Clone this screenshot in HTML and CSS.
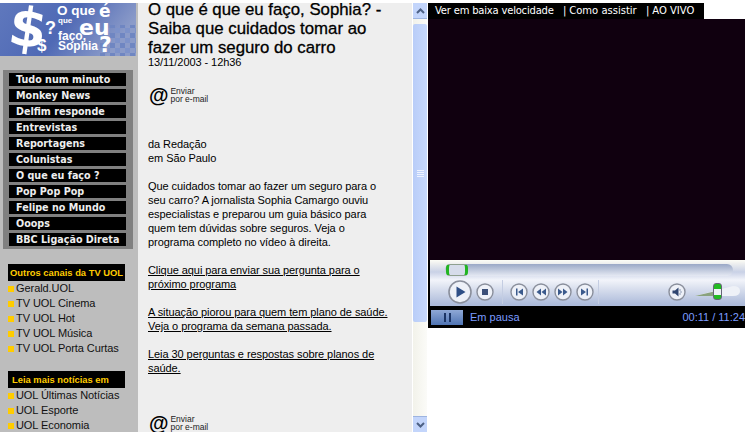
FILE: index.html
```html
<!DOCTYPE html>
<html lang="pt-BR">
<head>
    <meta charset="UTF-8">
    <title>O que é que eu faço, Sophia?</title>
    <link rel="stylesheet" href="styles.css">
</head>
<body>
    <div class="page">
        <aside class="sidebar">
            <svg class="logo" viewBox="0 0 136 53" width="136" height="53">
                <defs>
                    <linearGradient id="logo-bg" x1="0" y1="0" x2="1" y2="0.3">
                        <stop offset="0" stop-color="#5f78bd"/>
                        <stop offset="0.55" stop-color="#4f69b5"/>
                        <stop offset="1" stop-color="#8b9bc9"/>
                    </linearGradient>
                    <pattern id="logo-checks" width="10" height="10" patternUnits="userSpaceOnUse">
                        <rect width="5" height="5" fill="#6f86c2"/>
                        <rect x="5" y="5" width="5" height="5" fill="#7d92ca"/>
                    </pattern>
                </defs>
                <rect width="136" height="53" fill="url(#logo-bg)"/>
                <rect x="100" y="22" width="36" height="31" fill="url(#logo-checks)"/>
                <text x="9" y="43" class="logo-dollar" transform="rotate(8 26 25)">$</text>
                <text x="45" y="31" class="logo-mark">?</text>
                <text x="37" y="48" class="logo-small-dollar">$</text>
                <text x="57" y="12" class="logo-word logo-word-top">O que</text>
                <text x="99" y="14" class="logo-e">é</text>
                <text x="58" y="20" class="logo-tiny">que</text>
                <text x="79" y="32" class="logo-big">eu</text>
                <text x="58" y="37" class="logo-word">faço,</text>
                <text x="58" y="47" class="logo-word">Sophia</text>
                <text x="99" y="49" class="logo-big">?</text>
            </svg>

            <nav class="menu">
                <a class="menu-item">Tudo num minuto</a>
                <a class="menu-item">Monkey News</a>
                <a class="menu-item">Delfim responde</a>
                <a class="menu-item">Entrevistas</a>
                <a class="menu-item">Reportagens</a>
                <a class="menu-item">Colunistas</a>
                <a class="menu-item">O que eu faço ?</a>
                <a class="menu-item">Pop Pop Pop</a>
                <a class="menu-item">Felipe no Mundo</a>
                <a class="menu-item">Ooops</a>
                <a class="menu-item">BBC Ligação Direta</a>
            </nav>

            <h3 class="side-head">Outros canais da TV UOL</h3>
            <ul class="side-list">
                <li>Gerald.UOL</li>
                <li>TV UOL Cinema</li>
                <li>TV UOL Hot</li>
                <li>TV UOL Música</li>
                <li>TV UOL Porta Curtas</li>
            </ul>

            <h3 class="side-head side-head-news">Leia mais notícias em</h3>
            <ul class="side-list">
                <li>UOL Últimas Notícias</li>
                <li>UOL Esporte</li>
                <li>UOL Economia</li>
            </ul>
        </aside>

        <main class="article">
            <h1>O que é que eu faço, Sophia? - Saiba que cuidados tomar ao fazer um seguro do carro</h1>
            <p class="date">13/11/2003 - 12h36</p>
            <a class="send-mail">
                <span class="at">@</span>
                <span class="send-label">Enviar<br>por e-mail</span>
            </a>
            <p class="byline">da Redação<br>em São Paulo</p>
            <p>Que cuidados tomar ao fazer um seguro para o seu carro? A jornalista Sophia Camargo ouviu especialistas e preparou um guia básico para quem tem dúvidas sobre seguros. Veja o programa completo no vídeo à direita.</p>
            <p><a class="link">Clique aqui para enviar sua pergunta para o próximo programa</a></p>
            <p><a class="link">A situação piorou para quem tem plano de saúde. Veja o programa da semana passada.</a></p>
            <p><a class="link">Leia 30 perguntas e respostas sobre planos de saúde.</a></p>
            <a class="send-mail send-mail-bottom">
                <span class="at">@</span>
                <span class="send-label">Enviar<br>por e-mail</span>
            </a>
        </main>

        <div class="scrollbar">
            <div class="scroll-btn">
                <svg width="9" height="6" viewBox="0 0 9 6"><path d="M1 5 L4.5 1.5 L8 5" fill="none" stroke="#4d6185" stroke-width="2"/></svg>
            </div>
            <div class="scroll-thumb">
                <span class="grip"></span><span class="grip"></span><span class="grip"></span><span class="grip"></span>
            </div>
            <div class="scroll-btn scroll-btn-down">
                <svg width="9" height="6" viewBox="0 0 9 6"><path d="M1 1 L4.5 4.5 L8 1" fill="none" stroke="#4d6185" stroke-width="2"/></svg>
            </div>
        </div>

        <section class="video-col">
            <div class="tabs">
                <span class="tab-first">Ver em baixa velocidade</span>
                <span class="tab-sep">|</span><span>Como assistir</span>
                <span class="tab-sep">|</span><span>AO VIVO</span>
            </div>
            <div class="player">
                <div class="screen"></div>
                <div class="controls">
                    <div class="seek">
                        <div class="seek-thumb"></div>
                    </div>
                    <div class="buttons">
                        <svg class="btn-play" width="24" height="24" viewBox="0 0 24 24">
                            <circle cx="12" cy="12" r="11" fill="#eef1f8" stroke="#8a8f9c" stroke-width="1.6"/>
                            <path d="M8.5 6.5 L17.5 12 L8.5 17.5 Z" fill="#2f4f86"/>
                        </svg>
                        <svg class="btn-stop" width="18" height="18" viewBox="0 0 18 18">
                            <circle cx="9" cy="9" r="8" fill="#eef1f8" stroke="#8a8f9c" stroke-width="1.4"/>
                            <rect x="6" y="6" width="6" height="6" fill="#3b4f78"/>
                        </svg>
                        <span class="btn-divider"></span>
                        <svg width="18" height="18" viewBox="0 0 18 18">
                            <circle cx="9" cy="9" r="8" fill="#eef1f8" stroke="#8a8f9c" stroke-width="1.4"/>
                            <path d="M6 5.5 H7.5 V12.5 H6 Z M13 5.5 V12.5 L8 9 Z" fill="#3b5a8c"/>
                        </svg>
                        <svg width="18" height="18" viewBox="0 0 18 18">
                            <circle cx="9" cy="9" r="8" fill="#eef1f8" stroke="#8a8f9c" stroke-width="1.4"/>
                            <path d="M9 5.5 V12.5 L4.5 9 Z M14 5.5 V12.5 L9.5 9 Z" fill="#3b5a8c"/>
                        </svg>
                        <svg width="18" height="18" viewBox="0 0 18 18">
                            <circle cx="9" cy="9" r="8" fill="#eef1f8" stroke="#8a8f9c" stroke-width="1.4"/>
                            <path d="M4 5.5 L8.5 9 L4 12.5 Z M9 5.5 L13.5 9 L9 12.5 Z" fill="#3b5a8c"/>
                        </svg>
                        <svg width="18" height="18" viewBox="0 0 18 18">
                            <circle cx="9" cy="9" r="8" fill="#eef1f8" stroke="#8a8f9c" stroke-width="1.4"/>
                            <path d="M5 5.5 L10 9 L5 12.5 Z M10.5 5.5 H12 V12.5 H10.5 Z" fill="#3b5a8c"/>
                        </svg>
                        <span class="btn-divider btn-divider-end"></span>
                        <svg class="btn-mute" width="18" height="18" viewBox="0 0 18 18">
                            <circle cx="9" cy="9" r="8" fill="#eef1f8" stroke="#8a8f9c" stroke-width="1.4"/>
                            <path d="M4.5 7.5 H7 L10.5 4.5 V13.5 L7 10.5 H4.5 Z" fill="#2f4570"/>
                            <path d="M12 6.5 V7.5 M13 8.5 V9.5 M12 10.5 V11.5" stroke="#2f4570" stroke-width="1"/>
                        </svg>
                        <div class="volume">
                            <svg class="volume-wedge" width="45" height="14" viewBox="0 0 45 14">
                                <path d="M0 11 L38 1 Q45 1 45 6 Q45 11 38 11 Z" fill="#eef1f7"/>
                                <path d="M0 11 L21 6 V11 Z" fill="#8aa27e"/>
                            </svg>
                            <span class="volume-thumb"></span>
                        </div>
                    </div>
                </div>
                <div class="status">
                    <div class="pause-btn"><span></span><span></span></div>
                    <span class="status-text">Em pausa</span>
                    <span class="status-time">00:11 / 11:24</span>
                </div>
            </div>
        </section>
    </div>
</body>
</html>
```

FILE: styles.css
```css
html, body {
    margin: 0;
    padding: 0;
    background: white;
}
body {
    padding-top: 3px;
    height: 429px;
    overflow: hidden;
    font-family: "Liberation Sans", Arial, sans-serif;
    font-size: 11px;
    color: black;
}
.page {
    display: flex;
    height: 429px;
}

/* left column */
.sidebar {
    width: 138px;
    flex: none;
    background-color: #bdbdbd;
    overflow: hidden;
}
.logo {
    display: block;
}
.logo text {
    font-family: "Liberation Sans", sans-serif;
    font-weight: bold;
    fill: white;
}
.logo .logo-dollar { font-family: "DejaVu Sans", sans-serif; font-size: 54px; }
.logo-mark { font-size: 18px; }
.logo-small-dollar { font-size: 17px; }
.logo-word { font-size: 12px; }
.logo-word-top { font-size: 13.5px; }
.logo-tiny { font-size: 8px; }
.logo .logo-e { font-family: "DejaVu Sans", sans-serif; font-size: 17px; }
.logo .logo-big { font-family: "DejaVu Sans", sans-serif; font-size: 22px; }
.menu {
    margin: 14px 0 0 3px;
    width: 130px;
    box-sizing: border-box;
    padding: 3px 7px 3px 6px;
    background-color: #808080;
    display: flex;
    flex-direction: column;
    gap: 3px;
}
.menu-item {
    display: block;
    height: 13px;
    line-height: 13px;
    padding-left: 7px;
    background-color: black;
    color: #eeeeee;
    font-family: "DejaVu Sans", sans-serif;
    font-size: 9.6px;
    font-weight: bold;
    white-space: nowrap;
    overflow: hidden;
}
.side-head {
    margin: 15px 0 0 8px;
    width: 117px;
    height: 17px;
    line-height: 17px;
    background-color: black;
    color: #ffcc00;
    font-size: 9.4px;
    font-weight: bold;
    text-indent: 2px;
    white-space: nowrap;
    overflow: hidden;
}
.side-head-news {
    margin-top: 15px;
    text-indent: 4px;
}
.side-list {
    list-style: none;
    margin: 0;
    padding: 0 0 0 8px;
}
.side-list li {
    height: 15px;
    line-height: 15px;
    color: #111;
    letter-spacing: -0.07px;
    white-space: nowrap;
    display: flex;
    align-items: center;
    gap: 2px;
}
.side-list li::before {
    content: "";
    width: 6px;
    height: 6px;
    background-color: #ffcc00;
    flex: none;
    margin-top: 1px;
}

/* article */
.article {
    width: 274px;
    flex: none;
    box-sizing: border-box;
    padding: 0 20px 0 10px;
    background-color: #eeeeee;
    overflow: hidden;
    line-height: 14px;
    letter-spacing: -0.07px;
}
.article h1 {
    margin: -3px 0 -2px 0;
    font-size: 16.8px;
    line-height: 19px;
    font-weight: normal;
    letter-spacing: 0;
    -webkit-text-stroke: 0.3px black;
}
.article p {
    margin: 0 0 14px 0;
}
.article .date {
    margin: 0;
    line-height: 14px;
}
.article .byline {
    margin-bottom: 14px;
}
.link {
    text-decoration: underline;
}
.send-mail {
    display: flex;
    align-items: center;
    gap: 2px;
    height: 18px;
    margin: 17px 0 33px 1px;
}
.send-mail-bottom {
    margin: 39px 0 0 1px;
}
.at {
    font-size: 20px;
    font-weight: bold;
    line-height: 18px;
}
.send-label {
    font-size: 8.5px;
    line-height: 8px;
    color: #222;
    letter-spacing: 0;
}

/* scrollbar */
.scrollbar {
    width: 16px;
    flex: none;
    box-sizing: border-box;
    background: linear-gradient(to right, #f2f2ea, #fbfbf8);
    display: flex;
    flex-direction: column;
    border-left: 1px solid white;
    border-right: 1px solid white;
}
.scroll-btn {
    height: 16px;
    flex: none;
    background-color: #c3d5fb;
    border-bottom: 1px solid #9db4e0;
    box-sizing: border-box;
    display: flex;
    align-items: center;
    justify-content: center;
}
.scroll-btn-down {
    margin-top: auto;
    border-bottom: none;
    border-top: 1px solid #9db4e0;
}
.scroll-thumb {
    margin-top: 5px;
    height: 298px;
    background: linear-gradient(to right, #b9cdf8, #c8d9fd);
    border-radius: 2px;
    display: flex;
    flex-direction: column;
    align-items: center;
    justify-content: center;
    gap: 1px;
}
.grip {
    width: 7px;
    height: 1px;
    background-color: #eef3ff;
}

/* player */
.video-col {
    flex: 1;
    min-width: 0;
}
.tabs {
    width: 276px;
    box-sizing: border-box;
    height: 16px;
    line-height: 16px;
    background-color: black;
    color: white;
    font-family: "DejaVu Sans", sans-serif;
    font-size: 10px;
    padding-left: 7px;
    white-space: nowrap;
    overflow: hidden;
}
.tab-first {
    letter-spacing: -0.2px;
}
.tab-sep {
    margin-left: 6px;
    margin-right: 3px;
}
.player {
    background-color: black;
    padding-left: 2px;
}
.screen {
    height: 241px;
    background-color: #10000f;
    margin-left: -2px;
}
.controls {
    height: 46px;
    box-sizing: border-box;
    padding-top: 4px;
    background: linear-gradient(to bottom, #fdfdf6 0, #f0f1f0 3px, #c9d1e6 12px, #f2f4fa 20px, #d5dcec 30px, #aebcdb 44px);
}
.seek {
    height: 12px;
    margin: 0 12px 0 15px;
    position: relative;
    border-radius: 6px;
    background: linear-gradient(to bottom, #9aa8c6, #e5e9f3);
}
.seek-thumb {
    position: absolute;
    left: 1px;
    top: 0;
    width: 16px;
    height: 10px;
    border: 1px solid #8fa08f;
    border-left: 3px solid #22b522;
    border-right: 3px solid #22b522;
    border-radius: 4px;
    background-color: #d6dcea;
}
.buttons {
    display: flex;
    align-items: center;
    height: 28px;
    margin-top: 2px;
    padding-left: 18px;
}
.buttons svg {
    display: block;
    flex: none;
}
.buttons svg + svg {
    margin-left: 4px;
}
.buttons .btn-play + .btn-stop {
    margin-left: 4px;
}
.btn-divider {
    width: 1px;
    height: 24px;
    margin: 0 7px 0 8px;
    background-color: #c4cde2;
}
.btn-divider-end {
    margin-right: 69px;
    margin-left: 4px;
}
.volume {
    position: relative;
    width: 45px;
    height: 18px;
    margin-left: 9px;
}
.volume-wedge {
    position: absolute;
    left: 0;
    top: 2px;
}
.volume-thumb {
    position: absolute;
    left: 18px;
    top: 0;
    width: 7px;
    height: 15px;
    border: 1px solid #667;
    border-radius: 3px;
    background: linear-gradient(to bottom, #22bb22 0 5px, #eef1f6 5px 11px, #22bb22 11px);
}
.status {
    height: 22px;
    display: flex;
    align-items: center;
    background-color: black;
    color: #7c9cff;
    font-size: 11px;
}
.pause-btn {
    width: 32px;
    height: 15px;
    margin: 1px 7px 0 1px;
    background: linear-gradient(to bottom, #8fa8d6, #4f74b3);
    display: flex;
    align-items: center;
    justify-content: center;
    gap: 3px;
}
.pause-btn span {
    width: 2px;
    height: 9px;
    background-color: #1c3566;
}
.status-time {
    margin-left: auto;
    white-space: nowrap;
}
```
